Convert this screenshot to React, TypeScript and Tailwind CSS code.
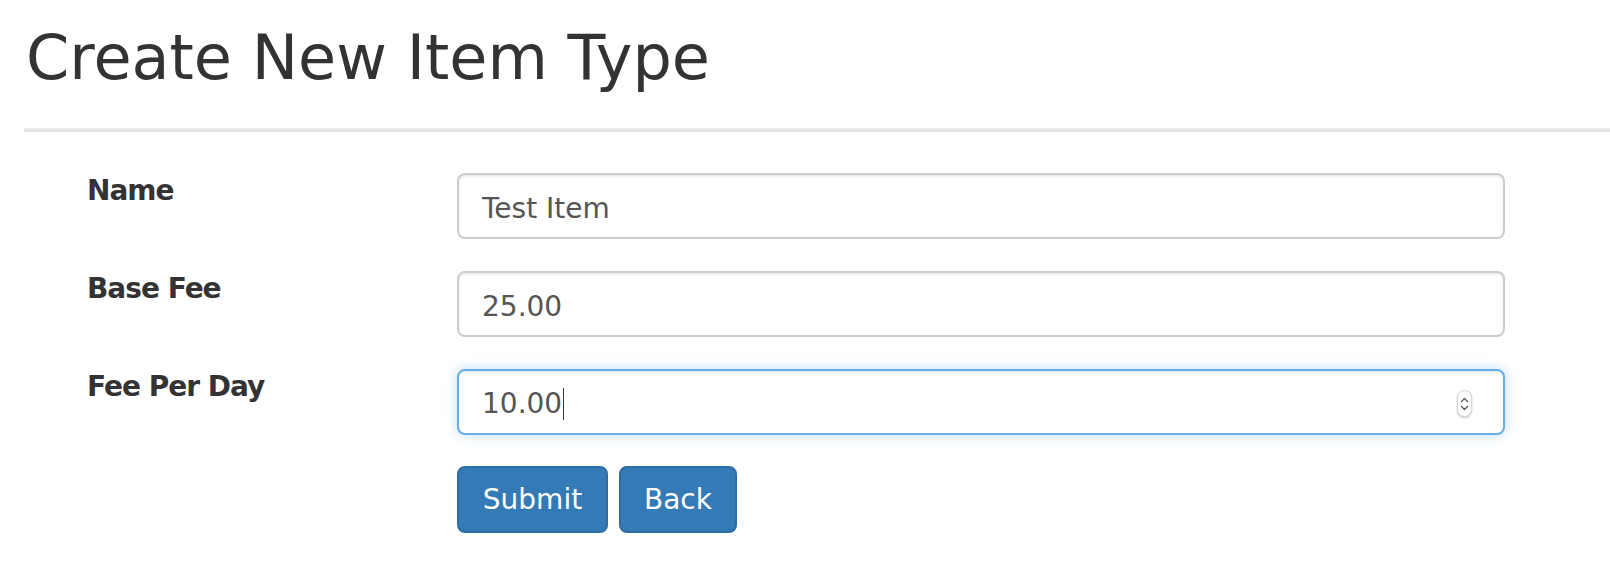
import * as React from "react"

const FONT = { fontFamily: '"DejaVu Sans", Verdana, sans-serif' }

const inputBase =
  "h-[66px] w-[1048px] rounded-[8px] border-2 bg-white pl-[23px] pr-4 pt-[4px] text-[28px] text-[#555] outline-none"

function Spinner() {
  return (
    <div className="absolute right-[31px] top-[19px] flex h-[27px] w-[15px] flex-col items-center justify-center rounded-full border border-[#d6d6d6] bg-white shadow-[0_1px_2px_rgba(0,0,0,0.25)]">
      <svg width="9" height="18" viewBox="0 0 9 18" fill="none" stroke="#555" strokeWidth="1.3" strokeLinecap="round" strokeLinejoin="round">
        <path d="M1.5 6.5 L4.5 3.5 L7.5 6.5" />
        <path d="M1.5 11.5 L4.5 14.5 L7.5 11.5" />
      </svg>
    </div>
  )
}

function FormRow({ label, children }: { label: string; children: React.ReactNode }) {
  return (
    <div className="flex">
      <label className="w-[370px] shrink-0 text-[28px] font-bold leading-[40px] tracking-[-1px] text-[#333] -mt-[2px]">
        {label}
      </label>
      {children}
    </div>
  )
}

export default function App() {
  return (
    <div className="min-h-[574px] bg-white pl-[24px]" style={FONT}>
      <h1 className="pl-[2px] pt-[24px] text-[62px] font-normal leading-[68px] text-[#333]">
        Create New Item Type
      </h1>

      <div className="mt-[36px] h-[4px] border-t-[2px] border-[#eeeeee] bg-[#e2e2e2]" />

      {/* Form */}
      <div className="mt-[41px] flex flex-col gap-[32px] pl-[63px]">
        <FormRow label="Name">
          <input
            type="text"
            defaultValue="Test Item"
            className={`${inputBase} border-[#cccccc] shadow-[inset_0_2px_2px_rgba(0,0,0,0.075)]`}
            style={FONT}
          />
        </FormRow>

        <FormRow label="Base Fee">
          <input
            type="text"
            defaultValue="25.00"
            className={`${inputBase} border-[#cccccc] shadow-[inset_0_2px_2px_rgba(0,0,0,0.075)]`}
            style={FONT}
          />
        </FormRow>

        <FormRow label="Fee Per Day">
          <div
            className={`${inputBase} relative flex items-center border-[#66afe9] shadow-[inset_0_2px_2px_rgba(0,0,0,0.075),0_0_12px_rgba(102,175,233,0.45)]`}
          >
            <span>10.00</span>
            <span className="ml-px h-[32px] w-px bg-[#333]" />
            <Spinner />
          </div>
        </FormRow>

        <div className="-mt-[1px] flex gap-[11px] pl-[370px]">
          <button className="h-[67px] w-[151px] rounded-[8px] border-2 border-[#2e6da4] bg-[#337ab7] text-[28px] text-white" style={FONT}>
            Submit
          </button>
          <button className="h-[67px] w-[118px] rounded-[8px] border-2 border-[#2e6da4] bg-[#337ab7] text-[28px] text-white" style={FONT}>
            Back
          </button>
        </div>
      </div>
    </div>
  )
}
